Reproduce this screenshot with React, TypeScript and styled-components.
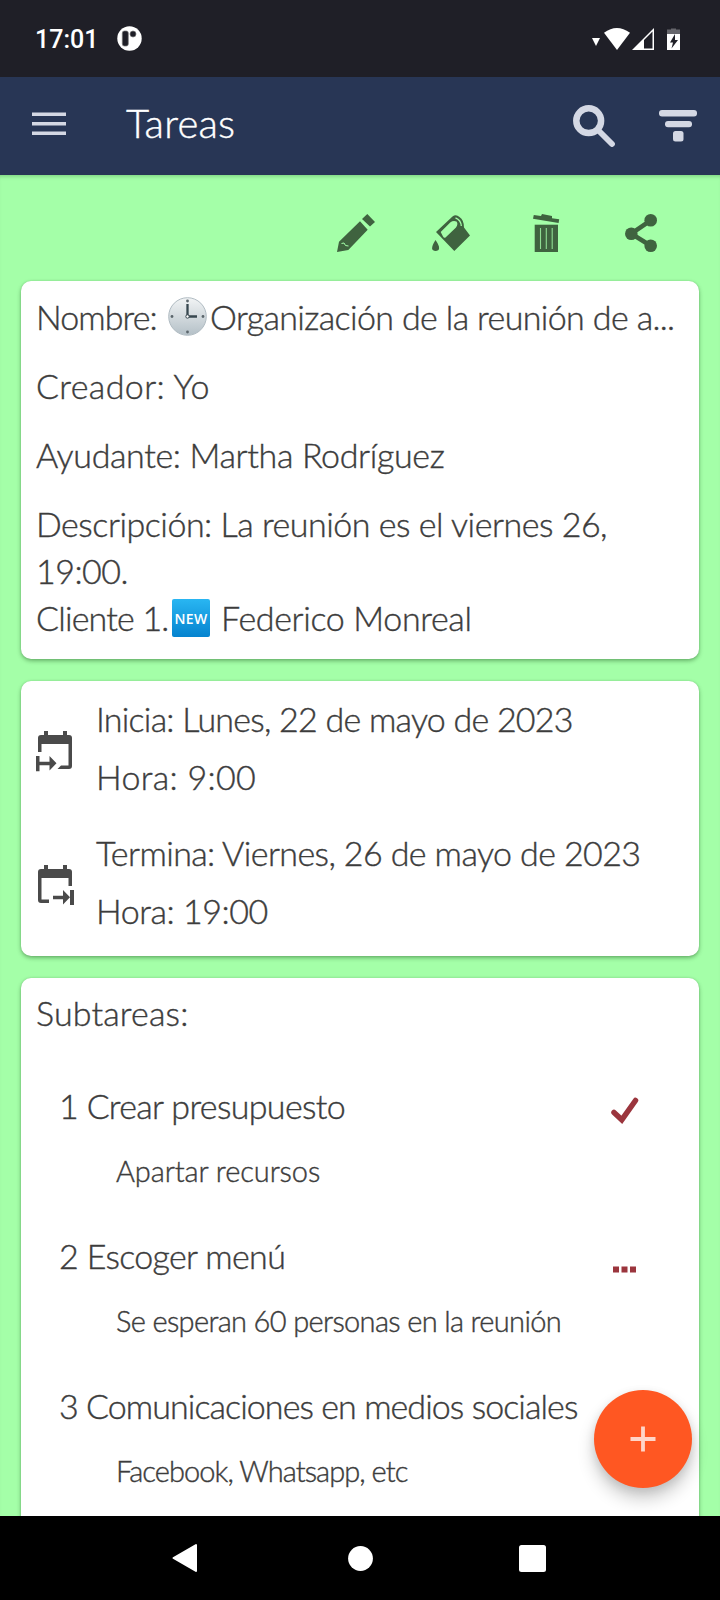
import React from 'react';
import styled, { createGlobalStyle } from 'styled-components';

const GlobalStyle = createGlobalStyle`
  * { box-sizing: border-box; }
  body { margin: 0; background: #000; }
`;

const Screen = styled.div`
  width: 720px;
  height: 1600px;
  display: flex;
  flex-direction: column;
  overflow: hidden;
  position: relative;
  font-family: Lato, 'Open Sans', sans-serif;
  font-weight: 300;
  color: #3c3c3c;
  background: #a4ffa8;
  svg { display: block; flex: none; }
`;

const StatusBar = styled.header`
  flex: none;
  height: 77px;
  padding: 0 40px 0 35px;
  display: flex;
  align-items: center;
  background: #1f1f27;
`;

const Clock = styled.span`
  font: 500 25px/29px Roboto, sans-serif;
  color: #fff;
  width: 82px;
  padding-top: 1px;
`;

const StatusIcons = styled.div`
  margin-left: auto;
  display: flex;
`;

const AppBar = styled.nav`
  flex: none;
  height: 98px;
  padding: 0 23px 0 32px;
  display: flex;
  align-items: center;
  background: #283655;
  color: #d4d8e4;
`;

const MenuIcon = styled.span`
  padding-bottom: 4px;
`;

const Title = styled.h1`
  margin: 0 auto 0 60px;
  font-size: 40px;
  font-weight: 300;
  line-height: 48px;
  letter-spacing: 0.2px;
  padding-bottom: 6px;
  color: #fff;
  -webkit-text-stroke: 0.4px currentColor;
`;

const BarIcons = styled.div`
  display: flex;
  align-items: center;
  gap: 44px;
`;

const Content = styled.main`
  flex: 1;
  min-height: 0;
  overflow: hidden;
  padding: 0 21px;
  display: flex;
  flex-direction: column;
  box-shadow: inset 0 4px 4px -3px rgba(0, 60, 0, 0.28);
`;

const Actions = styled.div`
  flex: none;
  height: 106px;
  padding: 39px 42px 0 0;
  display: flex;
  justify-content: flex-end;
  color: #3f633f;
`;

const Action = styled.span<{ $gap?: number }>`
  margin-left: ${p => p.$gap ?? 0}px;
`;

const Card = styled.section<{ $height: number; $top: number }>`
  flex: none;
  height: ${p => p.$height}px;
  padding: ${p => p.$top}px 15px 0;
  margin-bottom: 22px;
  border-radius: 10px;
  background: #fff;
  box-shadow: 0 2px 4px rgba(0, 50, 0, 0.36), 0 0 2px rgba(0, 50, 0, 0.15);
`;

const Line = styled.p<{ $track?: number; $after?: number }>`
  margin: 0 0 ${p => p.$after ?? 0}px;
  height: 47px;
  display: flex;
  align-items: center;
  font-size: 34px;
  line-height: 47px;
  letter-spacing: ${p => p.$track ?? 0}px;
  white-space: pre;
  -webkit-text-stroke: 0.4px currentColor;
`;

const Run = styled.span<{ $track: number; $width?: number; $before?: number }>`
  margin-left: ${p => p.$before ?? 0}px;
  letter-spacing: ${p => p.$track}px;
  ${p => p.$width && `width: ${p.$width}px;`}
`;

const NewBadge = styled.span`
  width: 38px;
  height: 38px;
  margin: 0 11px 0 1px;
  border-radius: 2px;
  background: linear-gradient(#29b6f2, #0583cf);
  color: #fff;
  font: 600 14px/39px 'Open Sans', sans-serif;
  letter-spacing: 0.3px;
  text-align: center;
  -webkit-text-stroke: 0;
`;

const DateRow = styled.div`
  display: flex;
  margin-bottom: 29px;
`;

const DateIcon = styled.div`
  width: 60px;
  padding-top: 36px;
`;

const SubTask = styled.div`
  height: 150px;
  padding-left: 23px;
`;

const SubHead = styled.div`
  display: flex;
  justify-content: space-between;
  padding-right: 45px;
`;

const Detail = styled.p<{ $track: number }>`
  margin: 22px 0 0 57px;
  font-size: 29px;
  line-height: 40px;
  letter-spacing: ${p => p.$track}px;
  white-space: pre;
  -webkit-text-stroke: 0.4px currentColor;
`;

const Mark = styled.span`
  padding-top: 15px;
`;

const Fab = styled.button`
  position: absolute;
  left: 594px;
  top: 1390px;
  width: 98px;
  height: 98px;
  padding: 0;
  border: 0;
  border-radius: 50%;
  display: grid;
  place-items: center;
  background: #ff5722;
  box-shadow: 0 11px 17px rgba(0, 0, 0, 0.2), 0 3px 10px rgba(0, 0, 0, 0.1);
`;

const NavBar = styled.footer`
  flex: none;
  height: 84px;
  padding: 0 174px 0 172px;
  display: grid;
  grid-template-columns: 176px 171px 27px;
  align-items: center;
  background: #000;
`;

const ClockFace = () => (
  <svg width="39" height="39" viewBox="0 0 39 39">
    <defs>
      <linearGradient id="face" x1="0" y1="0" x2="0" y2="1">
        <stop offset="0" stopColor="#f2f4f5" />
        <stop offset="1" stopColor="#b4c0c7" />
      </linearGradient>
    </defs>
    <circle cx="19.5" cy="19.5" r="18.8" fill="url(#face)" stroke="#b0bbc2" strokeWidth="1" />
    <g fill="#5c666c">
      <circle cx="19.5" cy="4" r="1.4" /><circle cx="19.5" cy="35" r="1.4" />
      <circle cx="4" cy="19.5" r="1.4" /><circle cx="35" cy="19.5" r="1.4" />
    </g>
    <path d="M19.5 19.5V7M19.5 19.5H29" stroke="#37474f" strokeWidth="2.3" />
    <circle cx="19.5" cy="19.5" r="1.7" fill="#fff" stroke="#37474f" strokeWidth="1" />
  </svg>
);

const CalendarBody = () => (
  <>
    <path d="M8 0h4v4h-4zM27 0h4v4h-4z" />
    <path d="M2 13V7Q2 4 5 4H33Q36 4 36 7V13z" />
  </>
);

const CalendarStart = () => (
  <svg width="39" height="41" viewBox="0 0 39 41" fill="#4a4a4a">
    <CalendarBody />
    <path d="M2 11h3.5v10h-3.5zM32.500 11h3.500v24q0 3-3 3h-11.500l3.500-3.500h7.500z" />
    <path d="M0 25h3.500v5.700h10V25l7 7.200-7 7.300v-5.300h-10v6H0z" />
  </svg>
);

const CalendarEnd = () => (
  <svg width="39" height="41" viewBox="0 0 39 41" fill="#4a4a4a">
    <CalendarBody />
    <path d="M2 11h3.500v23.500h7.500v3.500h-8q-3 0-3-3zM32.500 11h3.500v10h-3.500z" />
    <path d="M17 30.700h10V25l7 7.200v-7.200h4v15h-4v-7.800l-7 7.300v-5.300h-10z" />
  </svg>
);

const subtasks = [
  { title: '1 Crear presupuesto', track: -0.65, detail: 'Apartar recursos', detailTrack: -0.1, mark: 'done' },
  { title: '2 Escoger menú', track: -0.65, detail: 'Se esperan 60 personas en la reunión', detailTrack: -0.65, mark: 'pending' },
  { title: '3 Comunicaciones en medios sociales', track: -0.93, detail: 'Facebook, Whatsapp, etc', detailTrack: -0.93, mark: '' },
];

const dates = [
  { icon: <CalendarStart />, day: 'Inicia: Lunes, 22 de mayo de 2023', track: -0.76, hour: 'Hora: 9:00', hourTrack: 0.3 },
  { icon: <CalendarEnd />, day: 'Termina: Viernes, 26 de mayo de 2023', track: -0.6, hour: 'Hora: 19:00', hourTrack: -0.45 },
];

export default function App() {
  return (
    <Screen>
      <GlobalStyle />
      <StatusBar>
        <Clock>17:01</Clock>
        <svg width="25" height="25" viewBox="0 0 25 25">
          <circle cx="12.5" cy="12.5" r="12.2" fill="#fff" />
          <rect x="5.3" y="5" width="6" height="15" rx="2" fill="#1f1f27" stroke="#777" strokeWidth=".7" />
          <circle cx="16" cy="8" r="3" fill="#1f1f27" stroke="#777" strokeWidth=".7" />
        </svg>
        <StatusIcons>
          <svg width="88" height="24" viewBox="0 0 88 24" fill="#fff">
            <path d="M0 11h8l-4 8z" />
            <path d="M12 5.8Q24.8 -3.8 38 5.8L25 23z" />
            <path fillRule="evenodd" d="M62 1V23H40zM60.5 4.500L52 13V21.500H60.500z" />
            <path d="M75 2.500h4v-1h5v1h4V7H75z" fill="#66666c" />
            <path d="M75 7h13v16H75z" />
            <path d="M83 7l-5 8.500h3l-1.500 6L86 13h-3z" fill="#1f1f27" />
          </svg>
        </StatusIcons>
      </StatusBar>
      <AppBar>
        <MenuIcon>
          <svg width="34" height="24" viewBox="0 0 34 24" fill="currentColor">
            <path d="M0 .5h34v3.600H0zM0 10h34v3.600H0zM0 19.500h34v3.600H0z" />
          </svg>
        </MenuIcon>
        <Title>Tareas</Title>
        <BarIcons>
          <svg width="42" height="42" viewBox="0 0 42 42" fill="none" stroke="currentColor">
            <circle cx="15.700" cy="15.700" r="12.400" strokeWidth="6.500" />
            <path d="M25 25L39 39" strokeWidth="5.800" strokeLinecap="round" />
          </svg>
          <svg width="38" height="32" viewBox="0 0 38 32" fill="currentColor">
            <rect width="38" height="6.500" rx="3" />
            <rect x="6" y="11" width="27" height="6.300" rx="3" />
            <rect x="14" y="21" width="10.500" height="10.500" rx="2.500" />
          </svg>
        </BarIcons>
      </AppBar>
      <Content>
        <Actions>
          <Action>
            <svg width="38" height="38" viewBox="0 0 38 38" fill="currentColor">
              <path d="M30.300 0L38 8L33 12.600L25 5zM23 7.300L30.700 15.700L11.300 36L0 38L2 27.700z" />
              <path d="M4.500 29.500L7 29l1.500 2.500 3 .5" fill="none" stroke="#a4ffa8" strokeWidth="1" />
            </svg>
          </Action>
          <Action $gap={57}>
            <svg width="38" height="38" viewBox="0 0 38 38" fill="currentColor">
              <path fillRule="evenodd" d="M4 18L20.500 2.500Q24 0 27.500 3Q32 6 32 13.500L38 21.500L22.300 37zM8.700 18L18.500 8.200Q21.500 6 24.500 7.500Q26.500 9.500 24 13.500L13.500 23.500Q12 24.300 11 22.500z" />
              <path d="M23.500 3.800Q29 6 29.300 12" fill="none" stroke="#a4ffa8" strokeWidth="1.300" />
              <path d="M3.500 26Q-1.500 34 .8 36Q3.500 38 6.500 36Q8.500 33 3.500 26z" />
            </svg>
          </Action>
          <Action $gap={63}>
            <svg width="27" height="38" viewBox="0 0 27 38" fill="currentColor">
              <path d="M.8 1L8 2L9 0L19 2V4.200L26.200 5.300L25.600 9L0 4.700z" />
              <path d="M1.700 10.700H25V38H1.700z" />
              <path d="M7.500 14V35M13.300 14V35M19.200 14V35" stroke="#8fdc92" strokeWidth="1.100" />
            </svg>
          </Action>
          <Action $gap={65}>
            <svg width="32" height="38" viewBox="0 0 32 38" fill="currentColor">
              <path d="M25.700 6.300L6.300 19.700L25.700 31.700" fill="none" stroke="currentColor" strokeWidth="4.600" />
              <circle cx="25.700" cy="6.300" r="6.300" />
              <circle cx="6.300" cy="19.700" r="6.300" />
              <circle cx="25.700" cy="31.700" r="6.300" />
            </svg>
          </Action>
        </Actions>

        <Card $height={378} $top={12}>
          <Line $after={22}>
            <Run $track={-0.9} $width={132}>Nombre:</Run>
            <ClockFace />
            <Run $track={-0.62} $before={3}>Organización de la reunión de a...</Run>
          </Line>
          <Line $track={0.4} $after={22}>Creador: Yo</Line>
          <Line $track={-0.35} $after={22}>Ayudante: Martha Rodríguez</Line>
          <Line $track={-0.48}>Descripción: La reunión es el viernes 26,</Line>
          <Line $track={-0.5}>19:00.</Line>
          <Line>
            <Run $track={-0.8} $width={135}>Cliente 1.</Run>
            <NewBadge>NEW</NewBadge>
            <Run $track={-0.35}>Federico Monreal</Run>
          </Line>
        </Card>

        <Card $height={275} $top={14}>
          {dates.map(d => (
            <DateRow key={d.day}>
              <DateIcon>{d.icon}</DateIcon>
              <div>
                <Line $track={d.track} $after={11}>{d.day}</Line>
                <Line $track={d.hourTrack}>{d.hour}</Line>
              </div>
            </DateRow>
          ))}
        </Card>

        <Card $height={600} $top={11}>
          <Line $track={0.15} $after={46}>Subtareas:</Line>
          {subtasks.map(s => (
            <SubTask key={s.title}>
              <SubHead>
                <Line $track={s.track}>{s.title}</Line>
                <Mark>
                  {s.mark === 'done' && (
                    <svg width="28" height="27" viewBox="0 0 28 27">
                      <path d="M3 15.500L10.800 22.800L24.500 3.500" fill="none" stroke="#9b353d" strokeWidth="5.500" strokeLinecap="round" />
                    </svg>
                  )}
                  {s.mark === 'pending' && (
                    <svg width="28" height="27" viewBox="0 0 28 27" fill="#9b353d">
                      <path d="M2 19.500h6v6h-6zM10.500 19.500h6v6h-6zM19 19.500h6v6h-6z" />
                    </svg>
                  )}
                </Mark>
              </SubHead>
              <Detail $track={s.detailTrack}>{s.detail}</Detail>
            </SubTask>
          ))}
        </Card>
      </Content>
      <Fab aria-label="Añadir">
        <svg width="26" height="26" viewBox="0 0 26 26">
          <path d="M.5 13H25.500M13 .5V25.500" stroke="#ffd5c8" strokeWidth="3.800" />
        </svg>
      </Fab>
      <NavBar>
        <svg width="26" height="30" viewBox="0 0 26 30">
          <path d="M1.500 15L24 2V28z" fill="#fff" stroke="#fff" strokeWidth="2" strokeLinejoin="round" />
        </svg>
        <svg width="25" height="25" viewBox="0 0 25 25"><circle cx="12.500" cy="12.500" r="12.400" fill="#fff" /></svg>
        <svg width="27" height="27" viewBox="0 0 27 27"><rect width="27" height="27" rx="2.500" fill="#fff" /></svg>
      </NavBar>
    </Screen>
  );
}
